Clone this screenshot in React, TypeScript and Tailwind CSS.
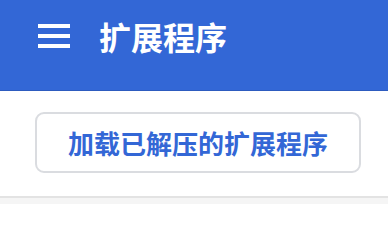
export default function App() {
  return (
    <div
      className="w-[388px] h-[204px] overflow-hidden bg-white flex flex-col"
      style={{ fontFamily: '"Noto Sans CJK SC", "Noto Sans", sans-serif' }}
    >
      {/* header */}
      <div className="h-[91px] shrink-0 bg-[#3367d6] border-b border-[#2d5bbf]">
        <div className="h-[72px] flex items-center pl-[38px]">
          <div className="flex flex-col gap-[6.5px] w-8">
            <div className="h-[3.5px] bg-white" />
            <div className="h-[3.5px] bg-white" />
            <div className="h-[3.5px] bg-white" />
          </div>
          <h1 className="ml-[29px] -mt-[1px] text-[32px] leading-none font-bold text-white">
            扩展程序
          </h1>
        </div>
      </div>

      {/* toolbar */}
      <div className="h-[105px] shrink-0 flex items-start pt-[21px] pl-[35px]">
        <button className="w-[326px] h-[61px] rounded-[9px] border-2 border-[#dadce0] bg-white flex items-center justify-center text-[26px] leading-none font-bold text-[#3367d6]">
          加载已解压的扩展程序
        </button>
      </div>

      <div className="flex-1 bg-[#f5f5f5] border-t-2 border-[#e3e3e3]" />
    </div>
  );
}
